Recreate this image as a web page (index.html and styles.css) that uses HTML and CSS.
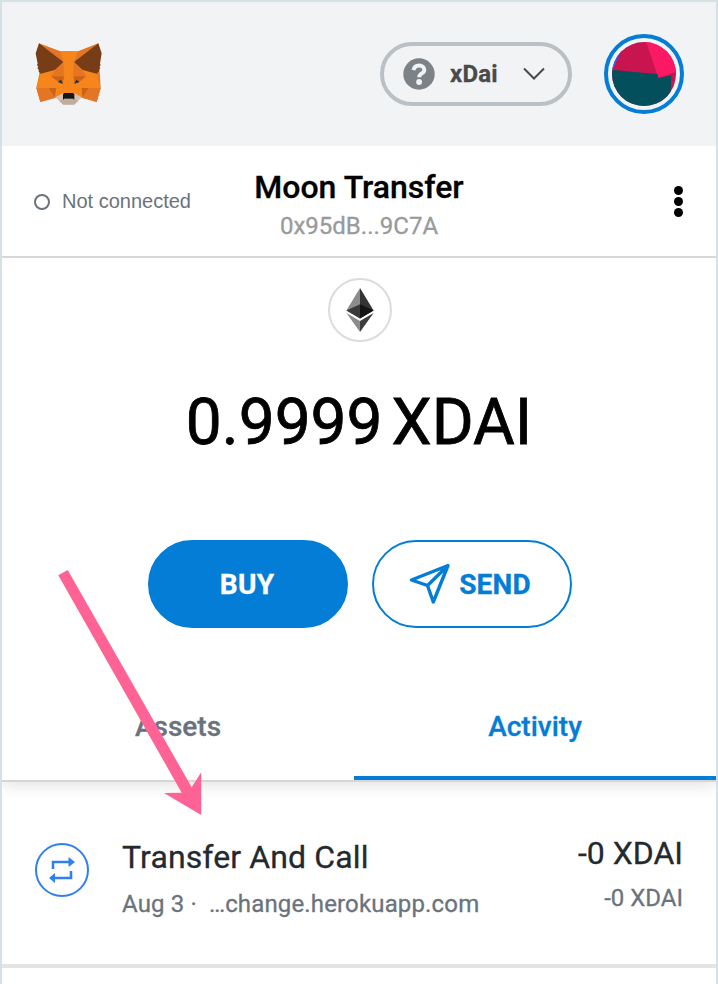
FILE: index.html
```html
<!DOCTYPE html>
<html lang="en">
<head>
<meta charset="utf-8">
<title>Wallet</title>
<link rel="stylesheet" href="styles.css">
</head>
<body>
<div class="wallet">
  <header class="header">
    <svg class="fox" viewBox="102 126 204 192">
      <path fill="#E27625" d="M117 130L181 153.500H234L295 130L299 215L302 264L290 306L247 294H166L121 306L109 264L118 222Z"/>
      <path fill="#F6851B" d="M181 154H233L223 187L247 210L291 221L302 264H265L240 280H172L148 264H109L121 222L166 209L190 187Z"/>
      <path fill="#763D16" d="M117 130L190 186L166 209L122 221L115 213L117 211L112 204L115 201L111 195L113 191L107 160ZM295 130L222 186L247 209L290 221L298 213L296 211L301 204L298 201L302 195L300 191L305 160Z"/>
      <path fill="#E27625" d="M190 187L193 229H153L166 209ZM222 187L219 229H258L247 209Z"/>
      <path fill="#CD6116" d="M153 229H192L189 250L168 241ZM258 229H220L223 250L245 241Z"/>
      <path fill="#F6851B" d="M153 229L168 242L189 251L193 229H219L223 251L245 242L258 229L265 264L240 285H172L146 264Z"/>
      <path fill="#E27625" d="M109 264H146L165 292L121 306ZM302 264H266L247 292L290 306Z"/>
      <path fill="#CD6116" d="M146 264H169L165 292ZM266 264H244L247 292Z"/>
      <path fill="#F6851B" d="M169 264L189 281L165 291ZM244 264L223 281L247 291Z"/>
      <path fill="#D7C1B3" d="M165 292L189 280L191 297H221L223 280L246 292L223 313H190Z"/>
      <path fill="#C0AD9E" d="M177 302L191 297H221L235 302L223 314H190Z"/>
      <path fill="#233447" d="M173 246L183 239L189 252ZM239 246L229 239L223 252Z"/>
      <path fill="#161616" d="M193 279H219L223 283V299L219 296H193L189 299V283Z"/>
    </svg>
    <div class="network">
      <svg class="question" viewBox="0 0 32 32">
        <circle cx="16" cy="16" r="15.700" fill="#7d8286"/>
        <path d="M10.500 12.200C11.200 8.800 13.200 7.600 16 7.600C19.200 7.600 21.300 9.300 21.300 11.900C21.300 15.800 16.200 15.100 16.200 19.200" fill="none" stroke="#f2f3f5" stroke-width="4"/>
        <circle cx="16.100" cy="24" r="2.900" fill="#f2f3f5"/>
      </svg>
      <span class="network-name">xDai</span>
      <svg class="chevron" viewBox="0 0 24 16"><path d="M2 2.500L12 12.500L22 2.500" fill="none" stroke="#4a4a4a" stroke-width="2"/></svg>
    </div>
    <div class="account">
      <svg viewBox="726 66 192 192">
        <clipPath id="disc"><circle cx="822" cy="162" r="96"/></clipPath>
        <g clip-path="url(#disc)">
          <rect x="726" y="66" width="192" height="192" fill="#c8144f"/>
          <path fill="#2962e8" d="M720 60H768L728 150H720Z"/>
          <path fill="#c8144f" d="M768 80L729 148L760 155L780 90Z"/>
          <path fill="#fb1965" d="M827 60H925V154L865 174Z"/>
          <path fill="#03505c" d="M720 149L863 163L865 174L904 166L900 264H720Z"/>
        </g>
      </svg>
    </div>
  </header>

  <section class="menu-bar">
    <div class="status"><i class="status-dot"></i><span>Not connected</span></div>
    <div class="identity">
      <div class="account-name">Moon Transfer</div>
      <div class="address">0x95dB...9C7A</div>
    </div>
    <div class="more"><i></i><i></i><i></i></div>
  </section>

  <main class="overview">
    <div class="token">
      <svg viewBox="0 0 28 44">
        <path fill="#343434" d="M14 0L27.600 22.500L14 30.500Z"/>
        <path fill="#8c8c8c" d="M14 0V30.500L.4 22.500Z"/>
        <path fill="#141414" d="M14 16.300L27.600 22.500L14 30.500Z"/>
        <path fill="#393939" d="M14 16.300V30.500L.4 22.500Z"/>
        <path fill="#3c3c3b" d="M14 33.100L27.600 25L14 44Z"/>
        <path fill="#8c8c8c" d="M14 33.100V44L.4 25Z"/>
      </svg>
    </div>
    <div class="balance"><span>0.9999</span><span>XDAI</span></div>
    <div class="actions">
      <div class="button buy">BUY</div>
      <div class="button send">
        <svg viewBox="0 0 42 42"><path d="M39 2.500L2.500 17L18.500 22.500L24.300 39Z M39 2.500L18.500 22.500" fill="none" stroke="#037dd6" stroke-width="3.400" stroke-linejoin="round"/></svg>
        <span>SEND</span>
      </div>
    </div>
  </main>

  <nav class="tabs">
    <div class="tab assets">Assets</div>
    <div class="tab activity">Activity</div>
  </nav>

  <article class="transaction">
    <div class="tx-icon">
      <svg viewBox="0 0 26 26"><path d="M4 12V5H20M22 14V21H6" fill="none" stroke="#2f80ed" stroke-width="2.600"/><path d="M19.500 0L26 5L19.500 10ZM6 16L0 21L6 26Z" fill="#2f80ed"/></svg>
    </div>
    <div class="tx-info">
      <div class="tx-title">Transfer And Call</div>
      <div class="tx-sub"><span>Aug 3 ·</span><span class="origin">…change.herokuapp.com</span></div>
    </div>
    <div class="tx-amounts">
      <div class="tx-primary">-0 XDAI</div>
      <div class="tx-secondary">-0 XDAI</div>
    </div>
  </article>
  <svg class="arrow" viewBox="0 0 144 246"><path fill="#ff6294" d="M9.700 0L133.700 217.300L143.200 202.300V245L106 223L123.700 222.700L.3 5.300Z"/></svg>
</div>
</body>
</html>
```
FILE: styles.css
```css
* { box-sizing: border-box; }
body {
  margin: 0;
  background: #fff;
  font-family: Roboto, "Liberation Sans", sans-serif;
  -webkit-text-stroke-width: .3px;
}
svg { display: block; flex: none; }
.wallet {
  position: relative;
  height: 984px;
  overflow: hidden;
  border: 2px solid #d6e1e5;
  border-bottom: 0;
}
.header {
  display: flex;
  align-items: center;
  height: 144px;
  padding: 0 32px;
  background: #f2f3f5;
}
.fox { width: 68px; height: 64px; }
.network {
  display: flex;
  align-items: center;
  width: 192px;
  height: 64px;
  margin-left: auto;
  padding: 0 22px 0 19px;
  border: 4px solid #bbc0c5;
  border-radius: 32px;
}
.question { width: 32px; height: 32px; }
.network-name {
  margin-left: 15px;
  color: #4a4a4a;
  font-size: 24px;
  font-weight: 700;
  letter-spacing: .2px;
}
.chevron { width: 24px; height: 16px; margin-left: auto; }
.account {
  width: 80px;
  height: 80px;
  margin-left: 32px;
  padding: 4px;
  border: 4px solid #037dd6;
  border-radius: 50%;
}
.account svg { width: 64px; height: 64px; }

.menu-bar {
  display: grid;
  grid-template-columns: 1fr 260px 1fr;
  align-items: center;
  height: 112px;
  padding: 0 32px;
  border-bottom: 2px solid #d6d9dc;
}
.status {
  display: flex;
  align-items: center;
  gap: 12px;
  padding-top: 1px;
  color: #6a737d;
  font-family: "Liberation Sans", sans-serif;
  font-size: 20px;
  white-space: nowrap;
  -webkit-text-stroke-width: 0;
}
.status-dot {
  flex: none;
  width: 16px;
  height: 16px;
  border: 2px solid #6a737d;
  border-radius: 50%;
}
.identity { padding-top: 5px; text-align: center; }
.account-name { font-size: 32px; font-weight: 500; line-height: 44px; }
.address { color: #989a9b; font-size: 24px; line-height: 34px; }
.more {
  display: flex;
  flex-direction: column;
  justify-self: end;
  gap: 2px;
  margin: 1px 1.5px 0 0;
}
.more i { width: 9px; height: 9px; border-radius: 50%; background: #000; }

.overview {
  display: flex;
  flex-direction: column;
  align-items: center;
  height: 414px;
  padding: 20px 0 0 2px;
}
.token {
  display: grid;
  place-items: center;
  width: 64px;
  height: 64px;
  border: 2px solid #dcdcdc;
  border-radius: 50%;
}
.token svg { width: 28px; height: 44px; }
.balance {
  display: flex;
  gap: 9px;
  margin: 38px 2px 0 0;
  font-size: 64px;
  line-height: 86px;
  -webkit-text-stroke-width: .8px;
}
.actions { display: flex; gap: 24px; margin-top: 74px; }
.button {
  display: flex;
  align-items: center;
  justify-content: center;
  width: 200px;
  height: 88px;
  border: 2px solid #037dd6;
  border-radius: 44px;
  color: #037dd6;
  font-size: 28px;
  font-weight: 700;
}
.buy { padding-right: 2px; background: #037dd6; color: #fff; letter-spacing: .3px; }
.send { gap: 8px; padding-right: 4px; letter-spacing: .2px; }
.send svg { width: 42px; height: 42px; }

.tabs {
  position: relative;
  display: flex;
  height: 110px;
  border-bottom: 2px solid #d6d6d6;
  box-shadow: 0 4px 14px rgba(0, 0, 0, .11);
  clip-path: inset(0 0 -20px 0);
  background: #fff;
  font-size: 28px;
  font-weight: 500;
  line-height: 110px;
  text-align: center;
}
.assets { width: 352px; color: #6a737d; }
.activity {
  flex: 1;
  border-bottom: 4px solid #037dd6;
  color: #037dd6;
}

.transaction {
  display: flex;
  height: 186px;
  padding: 0 33px;
  border-bottom: 4px solid #e4e4e4;
}
.tx-icon {
  display: grid;
  place-items: center;
  width: 54px;
  height: 54px;
  margin-top: 61px;
  border: 2px solid #2f80ed;
  border-radius: 50%;
}
.tx-icon svg { width: 26px; height: 26px; }
.tx-info { margin: 52px 0 0 33px; }
.tx-title { color: #24292e; font-size: 32px; line-height: 46px; letter-spacing: .12px; }
.tx-sub {
  display: flex;
  gap: 12px;
  margin-top: 8px;
  color: #6a737d;
  font-size: 24px;
  line-height: 32px;
  letter-spacing: .15px;
}
.tx-amounts { margin: 48px 0 0 auto; text-align: right; }
.tx-primary { color: #24292e; font-size: 32px; line-height: 46px; }
.tx-secondary { margin-top: 5px; color: #6a737d; font-size: 24px; line-height: 34px; }

.arrow {
  position: absolute;
  top: 568px;
  left: 56px;
  width: 144px;
  height: 246px;
}
```
